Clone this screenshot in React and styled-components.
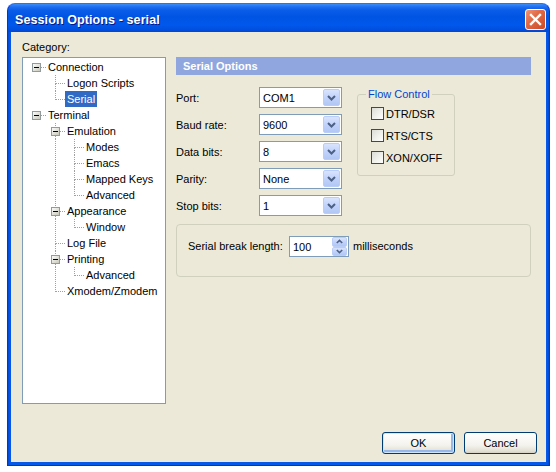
import React from "react";
import styled, { createGlobalStyle } from "styled-components";

const GlobalStyle = createGlobalStyle`
  html, body {
    margin: 0;
    background: #ffffff;
  }
  body {
    font-family: "Liberation Sans", Arial, sans-serif;
    font-size: 11px;
    color: #000000;
  }
`;

const treeNodes = [
  { text: "Connection", level: 0, kids: true, last: false },
  { text: "Logon Scripts", level: 1, last: false },
  { text: "Serial", level: 1, last: true, selected: true },
  { text: "Terminal", level: 0, kids: true, last: true },
  { text: "Emulation", level: 1, kids: true, last: false },
  { text: "Modes", level: 2, last: false },
  { text: "Emacs", level: 2, last: false },
  { text: "Mapped Keys", level: 2, last: false },
  { text: "Advanced", level: 2, last: true },
  { text: "Appearance", level: 1, kids: true, last: false },
  { text: "Window", level: 2, last: true },
  { text: "Log File", level: 1, last: false },
  { text: "Printing", level: 1, kids: true, last: false },
  { text: "Advanced", level: 2, last: true },
  { text: "Xmodem/Zmodem", level: 1, last: true },
];

const serialFields = [
  { label: "Port:", value: "COM1" },
  { label: "Baud rate:", value: "9600" },
  { label: "Data bits:", value: "8" },
  { label: "Parity:", value: "None" },
  { label: "Stop bits:", value: "1" },
];

const flowOptions = ["DTR/DSR", "RTS/CTS", "XON/XOFF"];

const DOT = "#a0a0a0";

const TreeLines = ({ node, openLevels }) => {
  const width = 23 + 19 * node.level;
  const cx = 13 + 19 * node.level;
  const x = cx + 0.5;
  const parts = [];

  openLevels.forEach((k) => {
    const ax = 13 + 19 * k + 0.5;
    parts.push(
      <line key={"a" + k} x1={ax} y1={0} x2={ax} y2={16} stroke={DOT} strokeDasharray="1 1" />
    );
  });

  if (node.level > 0) {
    const topEnd = node.kids ? 4 : 8.5;
    parts.push(
      <line key="up" x1={x} y1={0} x2={x} y2={topEnd} stroke={DOT} strokeDasharray="1 1" />
    );
    if (!node.last) {
      parts.push(
        <line key="down" x1={x} y1={node.kids ? 13 : 8.5} x2={x} y2={16} stroke={DOT} strokeDasharray="1 1" />
      );
    }
  }

  parts.push(
    <line
      key="h"
      x1={node.kids ? cx + 5 : cx + 1}
      y1={8.5}
      x2={width}
      y2={8.5}
      stroke={DOT}
      strokeDasharray="1 1"
    />
  );

  if (node.kids) {
    parts.push(
      <g key="box">
        <rect x={cx - 3.5} y={4.5} width={8} height={8} fill="url(#boxfill)" stroke="#919b9c" />
        <line x1={cx - 2} y1={8.5} x2={cx + 3} y2={8.5} stroke="#000000" />
      </g>
    );
  }

  return (
    <svg width={width} height={16} shapeRendering="crispEdges" style={{ flex: "none" }}>
      <defs>
        <linearGradient id="boxfill" x1="0" y1="0" x2="1" y2="1">
          <stop offset="0" stopColor="#ffffff" />
          <stop offset="1" stopColor="#c6c5b8" />
        </linearGradient>
      </defs>
      {parts}
    </svg>
  );
};

const Chevron = ({ up }) => (
  <svg width="9" height="6" viewBox="0 0 9 6">
    <polyline
      points={up ? "1,5 4.5,1.5 8,5" : "1,1 4.5,4.5 8,1"}
      fill="none"
      stroke="#4d6185"
      strokeWidth="2"
    />
  </svg>
);

const Combo = ({ value }) => (
  <ComboBox>
    <ComboText>{value}</ComboText>
    <ComboButton>
      <Chevron />
    </ComboButton>
  </ComboBox>
);

const App = () => {
  const lastAt = {};
  const rows = treeNodes.map((node, i) => {
    const openLevels = [];
    for (let k = 1; k < node.level; k++) {
      if (!lastAt[k]) openLevels.push(k);
    }
    lastAt[node.level] = node.last;
    return (
      <TreeRow key={i}>
        <TreeLines node={node} openLevels={openLevels} />
        <TreeLabel $selected={node.selected}>{node.text}</TreeLabel>
      </TreeRow>
    );
  });

  return (
    <>
      <GlobalStyle />
      <Window>
        <TitleBar>
          <TitleText>Session Options - serial</TitleText>
          <CloseButton>
            <svg width="13" height="13" viewBox="0 0 13 13">
              <path d="M2 2 L11 11 M11 2 L2 11" stroke="#ffffff" strokeWidth="2.4" strokeLinecap="square" />
            </svg>
          </CloseButton>
        </TitleBar>
        <Client>
          <CategoryLabel>Category:</CategoryLabel>
          <Body>
            <Tree>{rows}</Tree>
            <Panel>
              <PanelHeader>Serial Options</PanelHeader>
              <FormArea>
                <FieldColumn>
                  {serialFields.map((f) => (
                    <FieldRow key={f.label}>
                      <FieldLabel>{f.label}</FieldLabel>
                      <Combo value={f.value} />
                    </FieldRow>
                  ))}
                </FieldColumn>
                <GroupBox>
                  <GroupLegend>Flow Control</GroupLegend>
                  <CheckList>
                    {flowOptions.map((o) => (
                      <CheckRow key={o}>
                        <CheckBox />
                        <span>{o}</span>
                      </CheckRow>
                    ))}
                  </CheckList>
                </GroupBox>
              </FormArea>
              <BreakGroup>
                <BreakLabel>Serial break length:</BreakLabel>
                <Spinner>
                  <ComboText>100</ComboText>
                  <SpinButtons>
                    <SpinButton>
                      <Chevron up />
                    </SpinButton>
                    <SpinButton>
                      <Chevron />
                    </SpinButton>
                  </SpinButtons>
                </Spinner>
                <Unit>milliseconds</Unit>
              </BreakGroup>
            </Panel>
          </Body>
          <ButtonRow>
            <PushButton $default>OK</PushButton>
            <PushButton>Cancel</PushButton>
          </ButtonRow>
        </Client>
      </Window>
    </>
  );
};

const Window = styled.div`
  margin: 3px 0 0 7px;
  width: 543px;
  height: 463px;
  box-sizing: border-box;
  border: 1px solid #0831d9;
  border-top-color: #2f6ff0;
  border-radius: 8px 8px 0 0;
  background: linear-gradient(to right, #0046d5, #0858e8 2px, #0858e8 calc(100% - 2px), #0046d5);
  display: flex;
  flex-direction: column;
  overflow: hidden;
`;

const TitleBar = styled.div`
  height: 28px;
  box-sizing: border-box;
  padding: 3px 3px 0 7px;
  display: flex;
  align-items: center;
  background: linear-gradient(
    to bottom,
    #3c8cf8 0%,
    #1f6ff2 10%,
    #0a5de8 22%,
    #0054e3 45%,
    #0058ec 75%,
    #0050e0 90%,
    #0046d5 100%
  );
`;

const TitleText = styled.div`
  flex: 1;
  color: #ffffff;
  font-weight: bold;
  font-size: 12.5px;
  text-shadow: 1px 1px 0 #0a1883;
  letter-spacing: 0.1px;
`;

const CloseButton = styled.div`
  width: 21px;
  height: 21px;
  box-sizing: border-box;
  border: 1px solid #ffffff;
  border-radius: 3px;
  background: linear-gradient(135deg, #ef9474 0%, #e06a47 40%, #cc4a23 100%);
  display: flex;
  align-items: center;
  justify-content: center;
`;

const Client = styled.div`
  flex: 1;
  margin: 0 3px 3px;
  padding: 9px 9px 8px 11px;
  background: #ece9d8;
  display: flex;
  flex-direction: column;
`;

const CategoryLabel = styled.div`
  line-height: 13px;
  height: 13px;
`;

const Body = styled.div`
  margin-top: 3px;
  display: flex;
  align-items: flex-start;
  gap: 10px;
`;

const Tree = styled.div`
  width: 144px;
  height: 347px;
  box-sizing: border-box;
  border: 1px solid #7f9db9;
  background: #ffffff;
  padding-top: 1px;
`;

const TreeRow = styled.div`
  display: flex;
  height: 16px;
  align-items: center;
`;

const TreeLabel = styled.span`
  padding: 0 2px;
  line-height: 16px;
  height: 16px;
  white-space: nowrap;
  background: ${(p) => (p.$selected ? "#316ac5" : "transparent")};
  color: ${(p) => (p.$selected ? "#ffffff" : "#000000")};
`;

const Panel = styled.div`
  width: 355px;
  display: flex;
  flex-direction: column;
`;

const PanelHeader = styled.div`
  height: 18px;
  line-height: 18px;
  padding-left: 7px;
  background: #8fa7de;
  color: #ffffff;
  font-weight: bold;
`;

const FormArea = styled.div`
  margin-top: 12px;
  display: flex;
  align-items: flex-start;
`;

const FieldColumn = styled.div`
  display: flex;
  flex-direction: column;
  gap: 6px;
`;

const FieldRow = styled.div`
  display: flex;
  align-items: center;
  height: 21px;
`;

const FieldLabel = styled.div`
  width: 83px;
`;

const ComboBox = styled.div`
  width: 83px;
  height: 21px;
  box-sizing: border-box;
  border: 1px solid #7f9db9;
  background: #ffffff;
  display: flex;
  align-items: center;
  padding-left: 3px;
`;

const ComboText = styled.span`
  flex: 1;
`;

const ComboButton = styled.div`
  width: 17px;
  height: 17px;
  margin-right: 1px;
  box-sizing: border-box;
  border: 1px solid #bacdf7;
  border-radius: 2px;
  background: linear-gradient(to bottom, #d9e4fd 0%, #c1d3fb 50%, #b2c7f5 100%);
  display: flex;
  align-items: center;
  justify-content: center;
`;

const GroupBox = styled.fieldset`
  margin: 1px 0 0 15px;
  width: 98px;
  min-width: 0;
  box-sizing: border-box;
  padding: 6px 8px 11px;
  border: 1px solid #d0d0bf;
  border-radius: 3px;
`;

const GroupLegend = styled.legend`
  padding: 0 2px;
  line-height: 13px;
  color: #0046d5;
`;

const CheckList = styled.div`
  display: flex;
  flex-direction: column;
  gap: 9px;
  padding-left: 5px;
`;

const CheckRow = styled.div`
  display: flex;
  align-items: center;
  gap: 2px;
  height: 13px;
  white-space: nowrap;
`;

const CheckBox = styled.div`
  width: 13px;
  height: 13px;
  box-sizing: border-box;
  border: 1px solid #1c5180;
  background: linear-gradient(135deg, #dcdcd7 0%, #f2f2ee 60%, #ffffff 100%);
  flex: none;
`;

const BreakGroup = styled.div`
  margin-top: 8px;
  height: 53px;
  box-sizing: border-box;
  border: 1px solid #d0d0bf;
  border-radius: 4px;
  padding: 11px 10px 0 11px;
  display: flex;
  align-items: flex-start;
`;

const BreakLabel = styled.div`
  width: 101px;
  line-height: 21px;
`;

const Spinner = styled(ComboBox)`
  width: 60px;
`;

const SpinButtons = styled.div`
  width: 15px;
  height: 19px;
  margin-right: 1px;
  display: flex;
  flex-direction: column;
`;

const SpinButton = styled.div`
  flex: 1;
  box-sizing: border-box;
  border: 1px solid #bacdf7;
  border-radius: 2px;
  background: linear-gradient(to bottom, #d9e4fd 0%, #c1d3fb 50%, #b2c7f5 100%);
  display: flex;
  align-items: center;
  justify-content: center;
  svg {
    width: 7px;
    height: 5px;
  }
`;

const Unit = styled.div`
  margin-left: 4px;
  line-height: 21px;
`;

const ButtonRow = styled.div`
  margin-top: auto;
  display: flex;
  justify-content: flex-end;
  gap: 9px;
`;

const PushButton = styled.div`
  width: 73px;
  height: 22px;
  box-sizing: border-box;
  border: 1px solid #003c74;
  border-radius: 3px;
  background: linear-gradient(to bottom, #ffffff 0%, #f4f3ee 60%, #e3e0d4 90%, #d6d0c5 100%);
  box-shadow: ${(p) =>
    p.$default ? "inset 0 0 0 1px #cee7ff, inset -1px -1px 0 2px #98b8ea" : "none"};
  display: flex;
  align-items: center;
  justify-content: center;
`;

export default App;
